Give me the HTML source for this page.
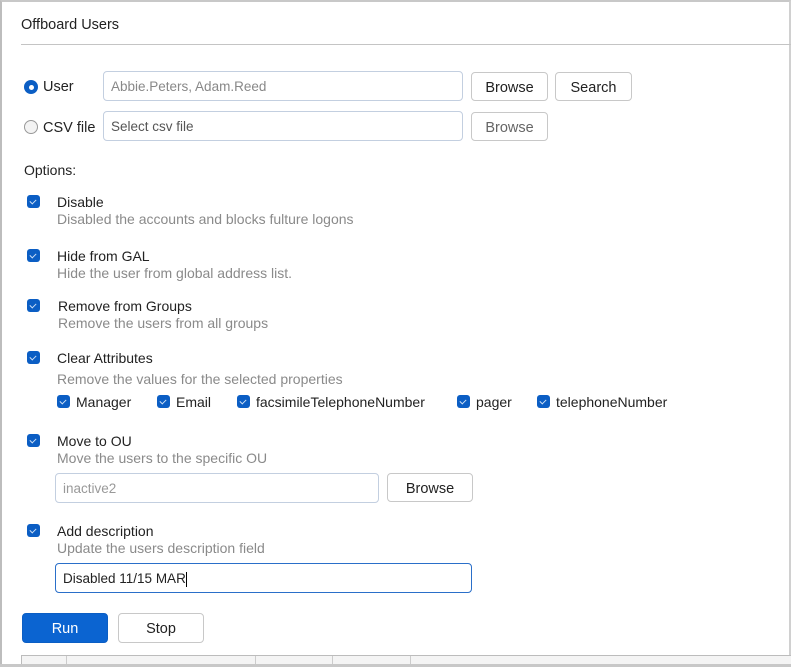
<!DOCTYPE html>
<html><head><style>
*{box-sizing:border-box;margin:0;padding:0}
body{width:791px;height:667px;background:#fff;font-family:"Liberation Sans",sans-serif;font-size:14px;color:#222;position:relative;overflow:hidden}
.a{position:absolute;white-space:nowrap}
.frame{position:absolute;left:0;top:0;width:791px;height:667px;border-left:2px solid #bdbdbd;border-top:2px solid #c8c8c8;border-right:2px solid #d0d0d0}
.in{position:absolute;border:1px solid #c3cfe0;border-radius:4px;height:30px;padding-left:7px;line-height:29px;color:#888;font-size:13.5px}
.btn{position:absolute;border:1px solid #c8c8c8;border-radius:4px;height:29px;line-height:30px;text-align:center;font-size:14.5px;color:#222}
.cb{position:absolute;width:13px;height:13px;background:#0b5ec4;border-radius:3px}
.cb::after{content:"";position:absolute;left:4px;top:2.5px;width:3px;height:5px;border:solid #cfe0f5;border-width:0 1px 1px 0;transform:rotate(45deg)}
.t{position:absolute;white-space:nowrap;color:#222}
.d{position:absolute;white-space:nowrap;color:#8a8a8a}
</style></head><body>
<div class="frame"></div>
<div class="a" style="left:21px;top:17px;font-size:14.5px">Offboard Users</div>
<div class="a" style="left:21px;top:44px;width:770px;height:1px;background:#c4c4c4"></div>

<div class="a" style="left:24px;top:80px;width:14px;height:14px;border-radius:50%;background:#0b5ec4"><div style="position:absolute;left:4.5px;top:4.5px;width:5px;height:5px;border-radius:50%;background:#fff"></div></div>
<div class="a" style="left:43px;top:79px;font-size:14.5px">User</div>
<div class="in" style="left:103px;top:71px;width:360px">Abbie.Peters, Adam.Reed</div>
<div class="btn" style="left:471px;top:72px;width:77px">Browse</div>
<div class="btn" style="left:555px;top:72px;width:77px">Search</div>

<div class="a" style="left:24px;top:120px;width:14px;height:14px;border-radius:50%;border:1px solid #999;background:#f3f3f3"></div>
<div class="a" style="left:43px;top:120px;font-size:14.5px">CSV file</div>
<div class="in" style="left:103px;top:111px;width:360px;color:#555">Select csv file</div>
<div class="btn" style="left:471px;top:112px;width:77px;color:#666">Browse</div>

<div class="a" style="left:24px;top:162px">Options:</div>

<div class="cb" style="left:27px;top:195px"></div>
<div class="t" style="left:57px;top:194px">Disable</div>
<div class="d" style="left:57px;top:211px">Disabled the accounts and blocks fulture logons</div>

<div class="cb" style="left:27px;top:249px"></div>
<div class="t" style="left:57px;top:248px">Hide from GAL</div>
<div class="d" style="left:57px;top:265px">Hide the user from global address list.</div>

<div class="cb" style="left:27px;top:299px"></div>
<div class="t" style="left:58px;top:298px">Remove from Groups</div>
<div class="d" style="left:58px;top:315px">Remove the users from all groups</div>

<div class="cb" style="left:27px;top:351px"></div>
<div class="t" style="left:57px;top:350px">Clear Attributes</div>
<div class="d" style="left:57px;top:371px">Remove the values for the selected properties</div>

<div class="cb" style="left:57px;top:395px"></div><div class="t" style="left:76px;top:394px">Manager</div>
<div class="cb" style="left:157px;top:395px"></div><div class="t" style="left:176px;top:394px">Email</div>
<div class="cb" style="left:237px;top:395px"></div><div class="t" style="left:256px;top:394px">facsimileTelephoneNumber</div>
<div class="cb" style="left:457px;top:395px"></div><div class="t" style="left:476px;top:394px">pager</div>
<div class="cb" style="left:537px;top:395px"></div><div class="t" style="left:556px;top:394px">telephoneNumber</div>

<div class="cb" style="left:27px;top:434px"></div>
<div class="t" style="left:57px;top:433px">Move to OU</div>
<div class="d" style="left:57px;top:450px">Move the users to the specific OU</div>
<div class="in" style="left:55px;top:473px;width:324px;color:#999">inactive2</div>
<div class="btn" style="left:387px;top:473px;width:86px">Browse</div>

<div class="cb" style="left:27px;top:524px"></div>
<div class="t" style="left:57px;top:523px">Add description</div>
<div class="d" style="left:57px;top:540px">Update the users description field</div>
<div class="in" style="left:55px;top:563px;width:417px;border-color:#2a6fc9;color:#222">Disabled 11/15 MAR<span style="display:inline-block;width:1px;height:15px;background:#000;vertical-align:middle"></span></div>

<div class="btn" style="left:22px;top:613px;width:86px;height:30px;line-height:30px;background:#0b64d1;border-color:#0b5ec4;color:#fff">Run</div>
<div class="btn" style="left:118px;top:613px;width:86px;height:30px;line-height:30px">Stop</div>

<div class="a" style="left:21px;top:655px;width:770px;height:12px;background:#f4f4f4;border-top:1px solid #bcbcbc;border-left:1px solid #bcbcbc"></div>
<div class="a" style="left:66px;top:656px;width:1px;height:11px;background:#ccc"></div>
<div class="a" style="left:255px;top:656px;width:1px;height:11px;background:#ccc"></div>
<div class="a" style="left:332px;top:656px;width:1px;height:11px;background:#ccc"></div>
<div class="a" style="left:410px;top:656px;width:1px;height:11px;background:#ccc"></div>
<div class="a" style="left:0;top:664px;width:791px;height:3px;background:#c8c8c8"></div>
</body></html>
